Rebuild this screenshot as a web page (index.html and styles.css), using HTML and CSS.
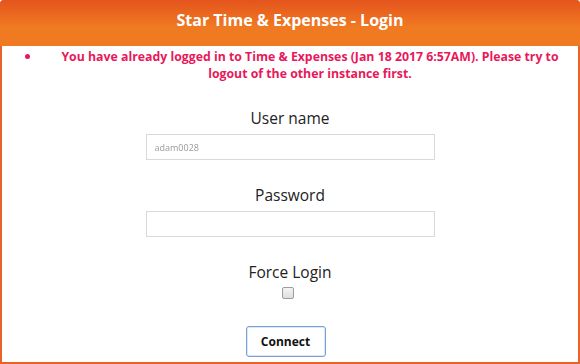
FILE: index.html
```html
<!DOCTYPE html>
<html lang="en">
<head>
    <meta charset="UTF-8">
    <title>Star Time &amp; Expenses - Login</title>
    <link rel="stylesheet" href="styles.css">
</head>
<body>
    <div class="login-box">
        <div class="login-header">Star Time &amp; Expenses - Login</div>
        <ul class="errors">
            <li>You have already logged in to Time &amp; Expenses (Jan 18 2017 6:57AM). Please try to logout of the other instance first.</li>
        </ul>
        <div class="field">
            <label for="username">User name</label>
            <input type="text" id="username" value="adam0028">
        </div>
        <div class="field">
            <label for="password">Password</label>
            <input type="password" id="password">
        </div>
        <div class="field force">
            <label for="force">Force Login</label>
            <input type="checkbox" id="force">
        </div>
        <button id="connect">Connect</button>
    </div>
</body>
</html>
```

FILE: styles.css
```css
body {
    margin: 0;
    font-family: "Open Sans", "Noto Sans", sans-serif;
    background: #fff;
}

.login-box {
    box-sizing: border-box;
    width: 580px;
    height: 364px;
    border: 2px solid #e9622a;
    border-top: none;
    border-radius: 4px 4px 0 0;
    display: flex;
    flex-direction: column;
    align-items: center;
}

.login-header {
    align-self: stretch;
    margin: 0 -2px;
    height: 46px;
    line-height: 40px;
    border-radius: 4px 4px 0 0;
    background: linear-gradient(#e4541d, #f07a22 60%, #f07a22);
    color: #fff;
    font-weight: bold;
    font-size: 16px;
    text-align: center;
}

/* error list under the header */
.errors {
    align-self: stretch;
    margin: 2px 0 0;
    padding: 0 18px 0 22px;
    list-style: none;
    color: #e8185a;
    font-weight: bold;
    font-size: 12.3px;
    line-height: 17px;
    text-align: center;
}

.errors li {
    position: relative;
    padding-left: 36px;
}

.errors li::before {
    content: "";
    position: absolute;
    left: 1px;
    top: 6px;
    width: 5px;
    height: 5px;
    border-radius: 50%;
    background: #e8185a;
}

.field {
    display: flex;
    flex-direction: column;
    align-items: center;
    margin-top: 25px;
}

.field + .field {
    margin-top: 24px;
}

.field label {
    font-size: 15.5px;
    color: #222;
    line-height: 22px;
    margin-bottom: 5px;
}

.field input[type="text"],
.field input[type="password"] {
    box-sizing: border-box;
    width: 289px;
    height: 26px;
    border: 1px solid #d9d9d9;
    padding: 0 8px;
    font-size: 9px;
    color: #9a9a9a;
    font-family: inherit;
}

#username {
    filter: blur(0.5px);
}

.force label {
    margin-bottom: 4px;
}

.force input {
    appearance: none;
    width: 12px;
    height: 12px;
    margin: 0 0 0 -3px;
    border: 1px solid #9c9c9c;
    border-radius: 2px;
    background: linear-gradient(#f4f4f4, #dedede);
}

#connect {
    margin: 27px 9px 0 0;
    width: 80px;
    height: 31px;
    background: #fff;
    border: 1px solid #7a9fd6;
    border-radius: 3px;
    box-shadow: inset 0 0 0 1px #dce7f7;
    font-family: inherit;
    font-weight: bold;
    font-size: 12px;
    color: #111;
}
```
